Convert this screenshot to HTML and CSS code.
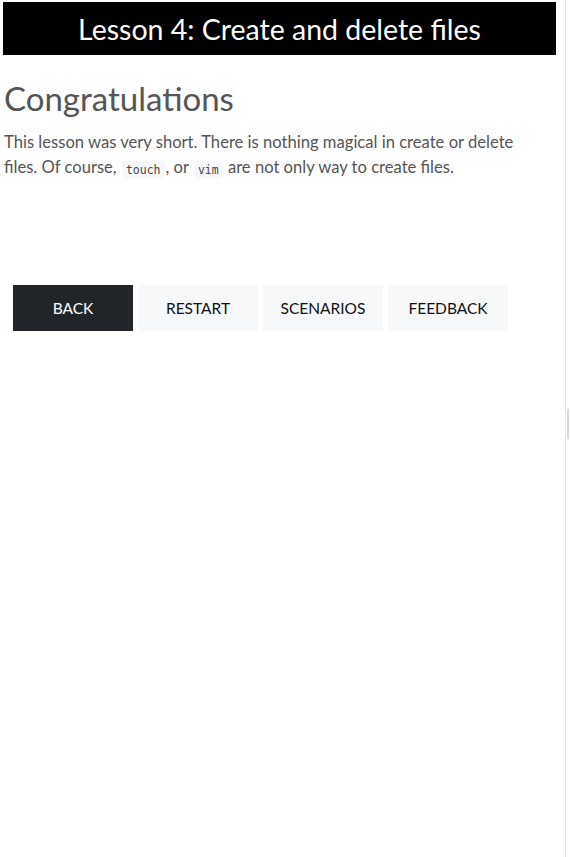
FILE: index.html
```html
<!DOCTYPE html>
<html>
<head>
<meta charset="utf-8">
<link rel="stylesheet" href="styles.css">
</head>
<body>
<div class="layout">
  <main class="pane">
    <h1 class="title">Lesson 4: Create and delete files</h1>
    <h2 class="heading">Congratulations</h2>
    <p class="text">This lesson was very short. There is nothing magical in create or delete files. Of course, <code>touch</code>, or <code>vim</code> are not only way to create files.</p>
    <div class="buttons">
      <button class="btn btn-dark">BACK</button>
      <button class="btn">RESTART</button>
      <button class="btn">SCENARIOS</button>
      <button class="btn">FEEDBACK</button>
    </div>
  </main>
  <div class="gutter"><span class="handle"></span></div>
</div>
</body>
</html>
```
FILE: styles.css
```css
html, body { margin: 0; padding: 0; background: #fff; }
.layout { display: flex; height: 857px; }
.pane { width: 566px; box-sizing: border-box; border-right: 1px solid #e6e6e6; padding: 2px 9px 0 3px; font-family: "Lato", "Liberation Sans", sans-serif; color: #555; }
.gutter { flex: 1; display: flex; align-items: center; justify-content: flex-end; }
.handle { display: block; width: 2px; height: 30px; background: #d8d8d8; margin-top: -10px; margin-right: 1px; }
.title { margin: 0; background: #000; color: #fff; height: 53px; display: flex; align-items: center; justify-content: center; font-size: 28.5px; font-weight: 400; }
.heading { margin: 24px 0 0 1px; font-size: 33px; font-weight: 400; color: #555; line-height: 38px; }
.text { margin: 13px 0 0 1px; max-width: 530px; font-size: 16.6px; line-height: 25px; }
code { display: inline-block; margin: 0 1px; font-family: "DejaVu Sans Mono", monospace; font-size: 11.5px; line-height: 18px; background: #f6f8fa; padding: 0 4px; border-radius: 3px; color: #444; vertical-align: -1px; }
.buttons { display: flex; gap: 5px; margin: 105px 0 0 10px; }
.btn { width: 120px; height: 46px; border: 0; background: #f7f8fa; color: #111; font-family: "Lato", sans-serif; font-size: 15.5px; padding: 0; }
.btn-dark { background: #212529; color: #fff; }
```
